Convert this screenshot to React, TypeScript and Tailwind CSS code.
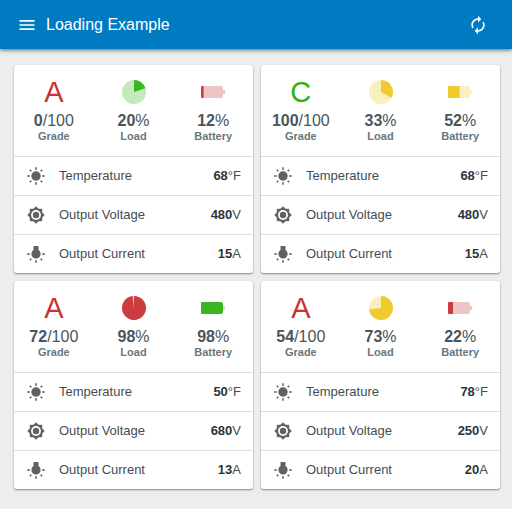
import { MdAutorenew, MdMenu } from "react-icons/md";
import type { ReactNode } from "react";

const GREEN = "#39b620";
const RED = "#ca3c3d";
const YELLOW = "#f0cb2f";

type Device = {
  id: string;
  grade: string;
  gradeColor: string;
  score: number;
  load: number;
  loadColor: string;
  battery: number;
  batteryColor: string;
  temperature: number;
  voltage: number;
  current: number;
};

const devices: Device[] = [
  { id: "a", grade: "A", gradeColor: "#cb3032", score: 0, load: 20, loadColor: GREEN, battery: 12, batteryColor: RED, temperature: 68, voltage: 480, current: 15 },
  { id: "b", grade: "C", gradeColor: "#2db314", score: 100, load: 33, loadColor: YELLOW, battery: 52, batteryColor: YELLOW, temperature: 68, voltage: 480, current: 15 },
  { id: "c", grade: "A", gradeColor: "#cb3032", score: 72, load: 98, loadColor: RED, battery: 98, batteryColor: GREEN, temperature: 50, voltage: 680, current: 13 },
  { id: "d", grade: "A", gradeColor: "#cb3032", score: 54, load: 73, loadColor: YELLOW, battery: 22, batteryColor: RED, temperature: 78, voltage: 250, current: 20 },
];

function Pie({ percent, color }: { percent: number; color: string }) {
  const angle = (percent / 100) * 2 * Math.PI;
  const x = 12 + 12 * Math.sin(angle);
  const y = 12 - 12 * Math.cos(angle);
  const large = percent > 50 ? 1 : 0;
  return (
    <svg viewBox="0 0 24 24" className="size-6" aria-hidden="true">
      <circle cx="12" cy="12" r="12" fill={color} opacity="0.3" />
      <path d={`M12 12V0A12 12 0 ${large} 1 ${x} ${y}Z`} fill={color} />
    </svg>
  );
}

const CELL = "M1 6H20.5L22 7.5V10H24V14H22V16.5L20.5 18H1Q0 18 0 17V7Q0 6 1 6Z";

function Battery({ percent, color }: { percent: number; color: string }) {
  const split = (percent / 100) * 22.4;
  return (
    <svg viewBox="0 0 24 24" className="size-6" aria-hidden="true">
      <clipPath id={`full-${percent}`}>
        <rect x="0" y="0" width={split} height="24" />
      </clipPath>
      <clipPath id={`rest-${percent}`}>
        <rect x={split} y="0" width={24 - split} height="24" />
      </clipPath>
      <path d={CELL} fill={color} clipPath={`url(#full-${percent})`} />
      <path d={CELL} fill={color} opacity="0.3" clipPath={`url(#rest-${percent})`} />
    </svg>
  );
}

function Rays({ angles }: { angles: number[] }) {
  return (
    <>
      {angles.map((angle) => (
        <rect key={angle} x="8.2" y="0.3" width="1.6" height={angle % 90 === 0 ? 2.5 : 2} transform={`rotate(${angle} 9 9)`} />
      ))}
    </>
  );
}

function SunIcon() {
  return (
    <svg viewBox="0 0 18 18" className="size-[18px]" fill="currentColor" aria-hidden="true">
      <circle cx="9" cy="9" r="4.7" />
      <Rays angles={[0, 45, 90, 135, 180, 225, 270, 315]} />
    </svg>
  );
}

function BrightnessIcon() {
  return (
    <svg viewBox="0 0 18 18" className="size-[18px]" fill="currentColor" aria-hidden="true">
      <rect x="2.8" y="2.8" width="12.4" height="12.4" />
      <rect x="2.8" y="2.8" width="12.4" height="12.4" transform="rotate(45 9 9)" />
      <circle cx="9" cy="9" r="4.9" fill="white" />
      <circle cx="9" cy="9" r="3.2" />
    </svg>
  );
}

function BulbIcon() {
  return (
    <svg viewBox="0 0 18 18" className="size-[18px]" fill="currentColor" aria-hidden="true">
      <path d="M6.5 1H11.5V5A4.6 4.6 0 1 1 6.5 5Z" />
      <Rays angles={[90, 135, 180, 225, 270]} />
    </svg>
  );
}

function Hero({ icon, value, unit, label }: { icon: ReactNode; value: number; unit: string; label: string }) {
  return (
    <div className="flex flex-1 flex-col items-center">
      <div className="mb-[7px] flex h-6 items-center justify-center">{icon}</div>
      <div className="text-base leading-[19px] text-[#4a565c]">
        <b>{value}</b>
        {unit}
      </div>
      <div className="text-[11px] leading-3 font-bold text-[#68777e]">{label}</div>
    </div>
  );
}

function Row({ icon, label, value, unit }: { icon: ReactNode; label: string; value: number; unit: string }) {
  return (
    <div className="flex h-[39px] items-center border-t border-[#dfe1e1] pr-3 pl-[13px] text-[13px] leading-4 text-[#424e54]">
      <div className="flex w-8 text-[#616161]">{icon}</div>
      <dt className="flex-1">{label}</dt>
      <dd>
        <b className="text-[#2b363c]">{value}</b>
        {unit}
      </dd>
    </div>
  );
}

function Card({ device }: { device: Device }) {
  return (
    <section className="rounded-[3px] bg-white shadow-[0_1px_2px_rgba(0,0,0,0.45)]">
      <div className="flex pt-[15px] pb-[14px]">
        <Hero
          icon={
            <span className="text-[29px] leading-6" style={{ color: device.gradeColor }}>
              {device.grade}
            </span>
          }
          value={device.score}
          unit="/100"
          label="Grade"
        />
        <Hero icon={<Pie percent={device.load} color={device.loadColor} />} value={device.load} unit="%" label="Load" />
        <Hero icon={<Battery percent={device.battery} color={device.batteryColor} />} value={device.battery} unit="%" label="Battery" />
      </div>
      <dl>
        <Row icon={<SunIcon />} label="Temperature" value={device.temperature} unit="°F" />
        <Row icon={<BrightnessIcon />} label="Output Voltage" value={device.voltage} unit="V" />
        <Row icon={<BulbIcon />} label="Output Current" value={device.current} unit="A" />
      </dl>
    </section>
  );
}

export default function App() {
  return (
    <div className="min-h-screen bg-[#eceeee] font-['Liberation_Sans',Arial,sans-serif]">
      <header className="flex h-[49px] items-center bg-[#007bc1] pr-6 pl-[17px] text-white shadow-[0_1px_4px_rgba(0,0,0,0.6)]">
        <button type="button" aria-label="Menu" className="mr-[9px] text-[20px]">
          <MdMenu />
        </button>
        <h1 className="flex-1 text-base leading-5">Loading Example</h1>
        <button type="button" aria-label="Refresh" className="text-[20px]">
          <MdAutorenew />
        </button>
      </header>
      <main className="grid grid-cols-2 gap-2 pt-4 pr-3 pb-5 pl-[14px]">
        {devices.map((device) => (
          <Card key={device.id} device={device} />
        ))}
      </main>
    </div>
  );
}
